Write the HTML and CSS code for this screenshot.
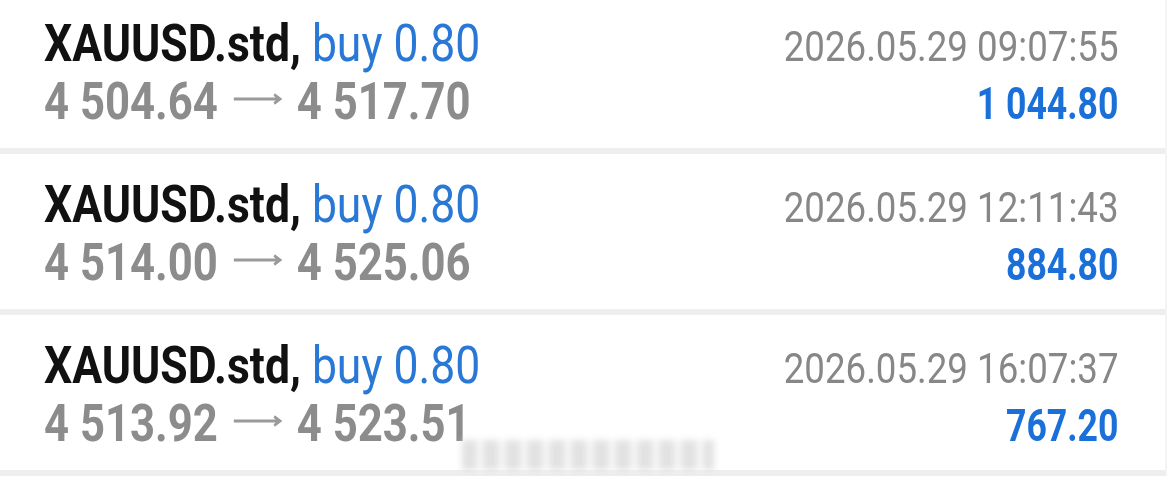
FILE: index.html
```html
<!DOCTYPE html>
<html lang="en">
<head>
    <meta charset="UTF-8">
    <meta name="viewport" content="width=device-width, initial-scale=1.0">
    <title>History</title>
    <link rel="stylesheet" href="styles.css">
</head>
<body>
    <div class="trades">
        <div class="trade">
            <div class="trade-main">
                <div class="symbol">XAUUSD.std, <span class="side">buy 0.80</span></div>
                <div class="prices">4 504.64 <svg class="arrow" viewBox="0 0 60 12"><path d="M2 6H57M50 1.5L57 6L50 10.5"/></svg> 4 517.70</div>
            </div>
            <div class="trade-meta">
                <div class="time">2026.05.29 09:07:55</div>
                <div class="profit">1 044.80</div>
            </div>
        </div>
        <div class="trade">
            <div class="trade-main">
                <div class="symbol">XAUUSD.std, <span class="side">buy 0.80</span></div>
                <div class="prices">4 514.00 <svg class="arrow" viewBox="0 0 60 12"><path d="M2 6H57M50 1.5L57 6L50 10.5"/></svg> 4 525.06</div>
            </div>
            <div class="trade-meta">
                <div class="time">2026.05.29 12:11:43</div>
                <div class="profit">884.80</div>
            </div>
        </div>
        <div class="trade">
            <div class="trade-main">
                <div class="symbol">XAUUSD.std, <span class="side">buy 0.80</span></div>
                <div class="prices">4 513.92 <svg class="arrow" viewBox="0 0 60 12"><path d="M2 6H57M50 1.5L57 6L50 10.5"/></svg> 4 523.51</div>
            </div>
            <div class="trade-meta">
                <div class="time">2026.05.29 16:07:37</div>
                <div class="profit">767.20</div>
            </div>
        </div>
        <div class="watermark"></div>
    </div>
</body>
</html>
```
FILE: styles.css
```css
body {
    margin: 0;
    background-color: #fff;
    font-family: Roboto, 'Liberation Sans', sans-serif;
}
.trades {
    position: relative;
    width: 1165px;
    border-right: 2px solid #f4f4f4;
}
.trade {
    display: flex;
    justify-content: space-between;
    align-items: baseline;
    padding: 22px 46px 15px 44px;
    border-bottom: 6px solid #eeeeee;
    line-height: 58px;
    white-space: nowrap;
}
.trade:first-child {
    padding-top: 15px;
}
.trade:last-of-type {
    border-bottom: 2px solid #ececec;
}
.trade-meta {
    text-align: right;
}
.symbol,
.prices {
    transform-origin: left center;
}
.time,
.profit {
    transform-origin: right center;
}
.symbol {
    font-size: 52px;
    font-weight: bold;
    color: #111;
    transform: scaleX(0.855);
}
.side {
    font-weight: normal;
    color: #2a78d6;
}
.prices {
    font-size: 52px;
    font-weight: bold;
    color: #8c8c8c;
    transform: scaleX(0.84);
}
.arrow {
    width: 60px;
    height: 12px;
    margin: 0 4px;
    vertical-align: 14px;
}
.arrow path {
    fill: none;
    stroke: #9a9a9a;
    stroke-width: 3;
}
.time {
    font-size: 43px;
    color: #878787;
    transform: scaleX(0.853);
}
.profit {
    font-size: 44px;
    font-weight: bold;
    color: #1a70d8;
    transform: scaleX(0.81);
}
.watermark {
    position: absolute;
    left: 462px;
    top: 440px;
    width: 252px;
    height: 30px;
    background: repeating-linear-gradient(90deg, #dadada 0 14px, #f4f4f4 14px 22px);
    filter: blur(3px);
    opacity: 0.8;
}
```
